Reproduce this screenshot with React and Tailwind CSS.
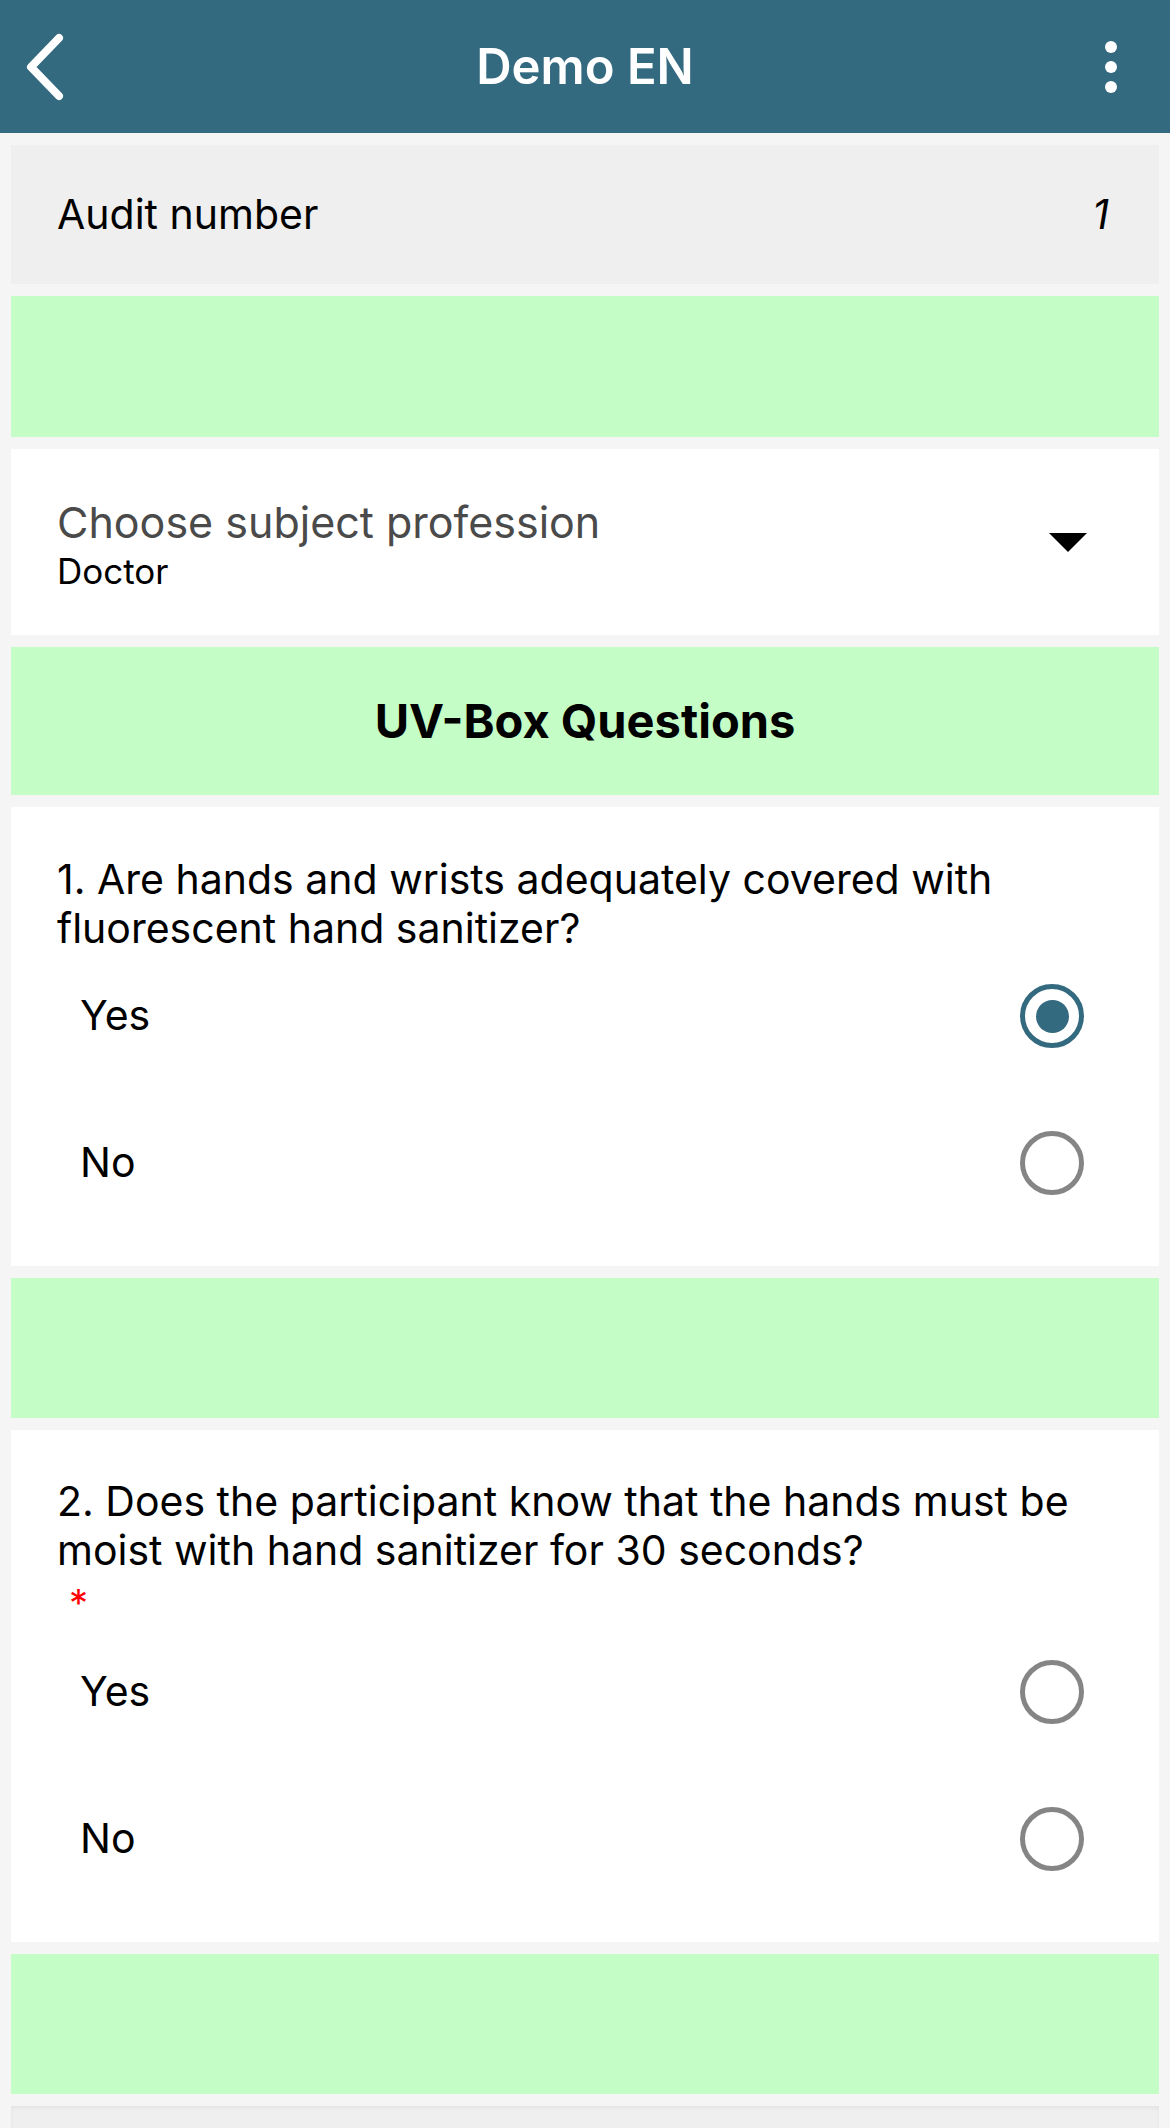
import { useState } from "react"

const font = { fontFamily: "Inter, 'Noto Sans', sans-serif" }

const Radio = ({ checked }) => (
    <div
        className={`w-[64px] h-[64px] rounded-full border-[5px] flex items-center justify-center ${checked ? "border-[#346a80]" : "border-[#858585]"}`}
    >
        {checked && <div className="w-[33px] h-[33px] rounded-full bg-[#346a80]" />}
    </div>
)

const Opcion = ({ label, checked, onClick }) => (
    <div className="h-[110px] flex items-center justify-between pl-[23px] pr-[75px]" onClick={onClick}>
        <span className="text-[41px] text-black">{label}</span>
        <Radio checked={checked} />
    </div>
)

const Pregunta = ({ texto, requerido, valor, setValor, pt }) => (
    <div className={`bg-white pl-[46px] ${pt} pb-[48px]`}>
        <p className="text-[41px] leading-[49px] text-black pr-[40px]">{texto}</p>
        {requerido ? (
            <div className="h-[34px] mt-[11px] pl-[12px] text-[38px] leading-[34px] text-[#ff0000]">*</div>
        ) : null}
        <div className={`flex flex-col gap-[37px] ${requerido ? "mt-[17px]" : "mt-[8px]"}`}>
            <Opcion label="Yes" checked={valor === "yes"} onClick={() => setValor("yes")} />
            <Opcion label="No" checked={valor === "no"} onClick={() => setValor("no")} />
        </div>
    </div>
)

const Verde = ({ children, h = "h-[140px]" }) => (
    <div className={`bg-[#c4fdc6] ${h} flex items-center justify-center`}>{children}</div>
)

const App = () => {
    const [resp1, setResp1] = useState("yes")
    const [resp2, setResp2] = useState(null)

    return (
        <div className="min-h-screen bg-[#f5f5f5]" style={font}>
            {/* HEADER */}
            <div className="h-[133px] bg-[#346a80] grid grid-cols-[1fr_auto_1fr] items-center px-[20px] text-white">
                <svg width="48" height="70" viewBox="0 0 48 70" className="ml-[1px]">
                    <path d="M38 6 L10 35 L38 64" fill="none" stroke="white" strokeWidth="8" strokeLinecap="round" strokeLinejoin="round" />
                </svg>
                <h1 className="text-[49px] font-semibold">Demo EN</h1>
                <div className="justify-self-end w-[48px] flex flex-col items-center gap-[8px] mr-[15px]">
                    <span className="w-[12px] h-[12px] rounded-full bg-white" />
                    <span className="w-[12px] h-[12px] rounded-full bg-white" />
                    <span className="w-[12px] h-[12px] rounded-full bg-white" />
                </div>
            </div>

            <div className="flex flex-col gap-[12px] px-[11px] pt-[12px]">
                <div className="h-[139px] bg-[#efefef] flex items-center justify-between pl-[46px] pr-[50px]">
                    <span className="text-[41px] text-black">Audit number</span>
                    <span className="text-[41px] italic text-black">1</span>
                </div>

                <Verde h="h-[141px]" />

                <div className="bg-white h-[186px] flex items-center justify-between pl-[46px] pr-[72px]">
                    <div className="flex flex-col">
                        <span className="text-[43px] leading-[56px] text-[#4a4a4a]">Choose subject profession</span>
                        <span className="text-[35px] leading-[40px] mt-[1px] text-black">Doctor</span>
                    </div>
                    <svg width="38" height="19" viewBox="0 0 38 19">
                        <path d="M0 0 H38 L19 19 Z" fill="black" />
                    </svg>
                </div>

                <Verde h="h-[148px]">
                    <h2 className="text-[47px] font-bold text-black">UV-Box Questions</h2>
                </Verde>

                <Pregunta
                    texto="1. Are hands and wrists adequately covered with fluorescent hand sanitizer?"
                    valor={resp1}
                    setValor={setResp1}
                    pt="pt-[48px]"
                />

                <Verde />

                <Pregunta
                    texto="2. Does the participant know that the hands must be moist with hand sanitizer for 30 seconds?"
                    requerido
                    valor={resp2}
                    setValor={setResp2}
                    pt="pt-[47px]"
                />

                <Verde />

                <div className="h-[80px] bg-[#efefef] shadow-inner" />
            </div>
        </div>
    )
}

export default App
